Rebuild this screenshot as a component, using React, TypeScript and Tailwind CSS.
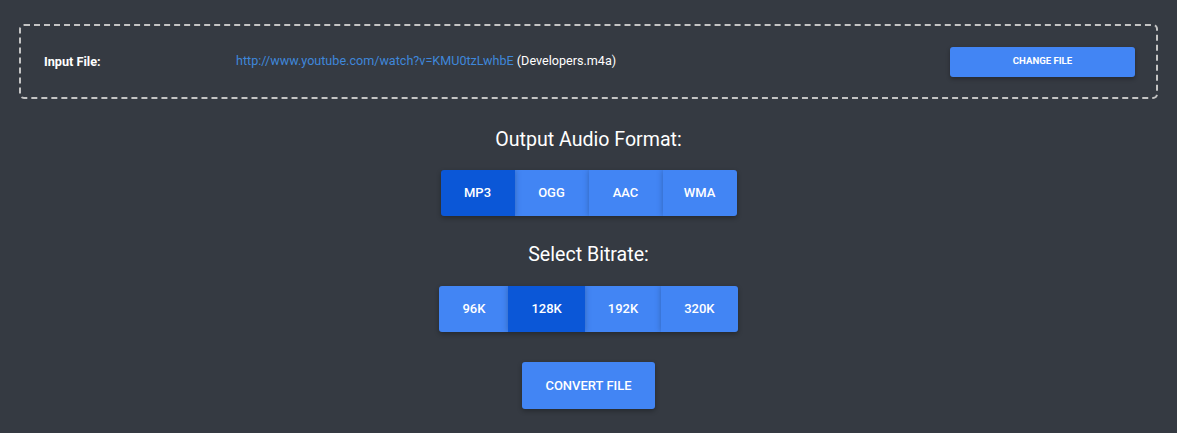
import { useState } from "react";

const formats = ["MP3", "OGG", "AAC", "WMA"];
const bitrates = ["96K", "128K", "192K", "320K"];

function Segmented({
  items,
  active,
  onPick,
  itemClass,
}: {
  items: string[];
  active: string;
  onPick: (v: string) => void;
  itemClass: string;
}) {
  return (
    <div className="flex rounded-[3px] overflow-hidden shadow-[0_2px_5px_rgba(0,0,0,0.3)]">
      {items.map((item) => (
        <button
          key={item}
          onClick={() => onPick(item)}
          className={`relative h-[46px] text-[13px] font-medium text-white shadow-[0_0_6px_rgba(0,0,0,0.25)] ${itemClass} ${
            item === active ? "z-10 bg-[#0b57d7]" : "bg-[#4285f4]"
          }`}
        >
          {item}
        </button>
      ))}
    </div>
  );
}

function App() {
  const [format, setFormat] = useState("MP3");
  const [bitrate, setBitrate] = useState("128K");

  return (
    <div
      className="min-h-[433px] bg-[#353a42] pt-[24px] px-[19px] text-white"
      style={{ fontFamily: "Roboto, 'Noto Sans', sans-serif" }}
    >
      {/* input file box */}
      <div className="flex items-center h-[75px] rounded-[5px] border-2 border-dashed border-[#c4c4c4] pl-[23px] pr-[21px]">
        <div className="w-[192px] text-[12.7px] font-bold">Input File:</div>
        <div className="flex-1 text-[12.6px]">
          <span className="text-[#3f87da]">
            http://www.youtube.com/watch?v=KMU0tzLwhbE
          </span>{" "}
          <span>(Developers.m4a)</span>
        </div>
        <button className="w-[185px] h-[30px] rounded-[3px] bg-[#4285f4] text-[9.6px] font-bold shadow-[0_2px_4px_rgba(0,0,0,0.3)]">
          CHANGE FILE
        </button>
      </div>

      <div className="flex flex-col items-center">
        <h2 className="mt-[27px] text-[19.6px] leading-[28px]">
          Output Audio Format:
        </h2>
        <div className="mt-[16px]">
          <Segmented
            items={formats}
            active={format}
            onPick={setFormat}
            itemClass="w-[74px]"
          />
        </div>

        <h2 className="mt-[25px] text-[19.6px] leading-[28px]">
          Select Bitrate:
        </h2>
        <div className="mt-[17px]">
          <Segmented
            items={bitrates}
            active={bitrate}
            onPick={setBitrate}
            itemClass="px-[23px]"
          />
        </div>

        <button className="mt-[30px] w-[133px] h-[47px] rounded-[3px] bg-[#4285f4] text-[13px] font-medium shadow-[0_2px_5px_rgba(0,0,0,0.3)]">
          CONVERT FILE
        </button>
      </div>
    </div>
  );
}

export default App;
